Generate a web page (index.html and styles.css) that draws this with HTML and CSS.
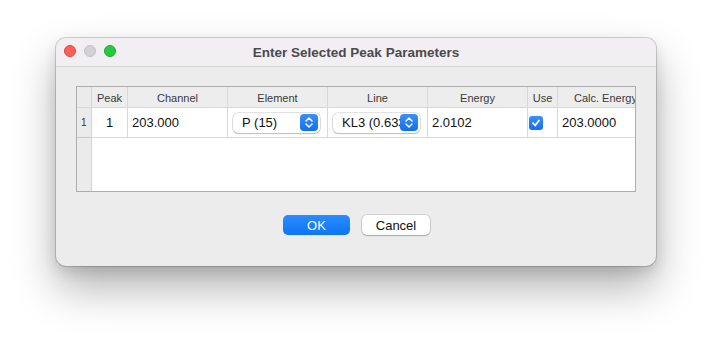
FILE: index.html
```html
<!DOCTYPE html>
<html lang="en">
<head>
    <meta charset="UTF-8">
    <meta name="viewport" content="width=device-width, initial-scale=1.0">
    <title>Enter Selected Peak Parameters</title>
    <link rel="stylesheet" href="styles.css">
</head>
<body>
    <!-- Ventana del diálogo -->
    <div class="window">
        <div class="titlebar">
            <div class="lights">
                <span class="light red"></span>
                <span class="light gray"></span>
                <span class="light green"></span>
            </div>
            <div class="title">Enter Selected Peak Parameters</div>
        </div>

        <div class="content">
            <!-- Tabla de picos -->
            <div class="table">
                <div class="cell corner"></div>
                <div class="cell head">Peak</div>
                <div class="cell head">Channel</div>
                <div class="cell head">Element</div>
                <div class="cell head">Line</div>
                <div class="cell head">Energy</div>
                <div class="cell head">Use</div>
                <div class="cell head last">Calc. Energy</div>

                <div class="cell rowhead">1</div>
                <div class="cell data center">1</div>
                <div class="cell data">203.000</div>
                <div class="cell data">
                    <div class="popup">
                        <span class="popup-text">P (15)</span>
                        <span class="stepper">
                            <svg width="8" height="11" viewBox="0 0 8 11"><path d="M1 4 L4 1 L7 4 M1 7 L4 10 L7 7" fill="none" stroke="#fff" stroke-width="1.5" stroke-linecap="round" stroke-linejoin="round"/></svg>
                        </span>
                    </div>
                </div>
                <div class="cell data">
                    <div class="popup">
                        <span class="popup-text">KL3 (0.6335)</span>
                        <span class="stepper">
                            <svg width="8" height="11" viewBox="0 0 8 11"><path d="M1 4 L4 1 L7 4 M1 7 L4 10 L7 7" fill="none" stroke="#fff" stroke-width="1.5" stroke-linecap="round" stroke-linejoin="round"/></svg>
                        </span>
                    </div>
                </div>
                <div class="cell data">2.0102</div>
                <div class="cell data use">
                    <span class="checkbox">
                        <svg width="10" height="10" viewBox="0 0 10 10"><path d="M2 5.2 L4.2 7.5 L8 2.5" fill="none" stroke="#fff" stroke-width="1.8" stroke-linecap="round" stroke-linejoin="round"/></svg>
                    </span>
                </div>
                <div class="cell data last">203.0000</div>

                <div class="cell rowfill"></div>
                <div class="cell empty"></div>
            </div>

            <!-- Botones -->
            <div class="buttons">
                <button class="btn btn-ok">OK</button>
                <button class="btn btn-cancel">Cancel</button>
            </div>
        </div>
    </div>
</body>
</html>
```

FILE: styles.css
```css
/* Estilo general */
html {
    height: 100%;
    background-color: #ffffff;
}

body {
    margin: 0;
    min-height: 100%;
    box-sizing: border-box;
    padding: 38px 0 0 56px;
    background-color: #ffffff;
    font-family: 'Liberation Sans', Arial, sans-serif;
    font-size: 13px;
    color: #1e1e1e;
}

.window {
    width: 600px;
    height: 228px;
    box-sizing: border-box;
    background-color: #ececec;
    border-radius: 10px;
    box-shadow: 0 0 0 1px rgba(0, 0, 0, 0.16), 0 22px 44px rgba(0, 0, 0, 0.3), 0 6px 14px rgba(0, 0, 0, 0.12);
    overflow: hidden;
}

.titlebar {
    height: 29px;
    box-sizing: border-box;
    background-color: #f1eff2;
    border-bottom: 1px solid #d6d4d7;
    display: flex;
    align-items: center;
    position: relative;
}

.lights {
    display: flex;
    gap: 8px;
    padding-left: 8px;
    position: absolute;
    left: 0;
    top: 7px;
}

.light {
    width: 12px;
    height: 12px;
    border-radius: 50%;
    box-sizing: border-box;
}

.red { background-color: #fe5f57; border: 1px solid #e0443e; }
.gray { background-color: #d3d1d5; border: 1px solid #c3c1c5; }
.green { background-color: #28c840; border: 1px solid #1aab29; }

.title {
    flex: 1;
    text-align: center;
    font-weight: bold;
    font-size: 13.5px;
    color: #4b494d;
}

.content {
    padding: 19px 20px 0 20px;
}

/* Tabla */
.table {
    display: grid;
    grid-template-columns: 15px 36px 100px 100px 100px 100px 30px 1fr;
    grid-template-rows: 21px 30px 53px;
    border: 1px solid #adadad;
    background-color: #ffffff;
}

.cell {
    box-sizing: border-box;
    border-right: 1px solid #d9d9d9;
    border-bottom: 1px solid #d9d9d9;
    display: flex;
    align-items: center;
    white-space: nowrap;
    overflow: hidden;
}

.last { border-right: none; }

.corner, .rowhead, .rowfill {
    background-color: #ebebeb;
    border-right-color: #d3d3d3;
}

.head {
    background-color: #ededed;
    justify-content: center;
    font-size: 11px;
    color: #3a3a3a;
    padding-top: 1px;
}

.head.last {
    justify-content: flex-start;
    padding-left: 16px;
}

.rowhead {
    font-size: 10px;
    color: #333;
    padding-left: 4px;
    border-bottom-color: #c9c9c9;
}

.rowfill {
    border-bottom: none;
}

.empty {
    grid-column: 2 / 9;
    border: none;
}

.data {
    padding-left: 4px;
    font-size: 13px;
    color: #111;
}

.center {
    justify-content: center;
    padding-left: 0;
}

.data .popup {
    margin-left: 1px;
}

.popup {
    width: 87px;
    height: 20px;
    flex-shrink: 0;
    box-sizing: border-box;
    background-color: #fff;
    border-radius: 5px;
    box-shadow: 0 0 0 0.5px rgba(0, 0, 0, 0.22), 0 1px 1.5px rgba(0, 0, 0, 0.18);
    display: flex;
    align-items: center;
    padding-left: 9px;
    padding-right: 2px;
}

.popup-text {
    flex: 1;
    overflow: hidden;
    white-space: nowrap;
    font-size: 13px;
    color: #111;
}

.stepper {
    width: 18px;
    height: 17px;
    border-radius: 4px;
    background: linear-gradient(#3b8ff9, #1170f1);
    display: flex;
    align-items: center;
    justify-content: center;
    flex-shrink: 0;
}

.use {
    padding-left: 1px;
}

.checkbox {
    width: 14px;
    height: 14px;
    border-radius: 3px;
    background: linear-gradient(#3b8ff9, #1170f1);
    display: flex;
    align-items: center;
    justify-content: center;
}

/* Botones */
.buttons {
    display: flex;
    justify-content: center;
    gap: 12px;
    margin-top: 23px;
}

.btn {
    width: 67px;
    height: 20px;
    border-radius: 5px;
    font-family: 'Liberation Sans', Arial, sans-serif;
    font-size: 13px;
    padding: 0;
    cursor: pointer;
}

.btn-ok {
    background: linear-gradient(#2c8bff, #0b76f7);
    color: #fff;
    border: none;
    margin-left: 1px;
}

.btn-cancel {
    width: 68px;
    background-color: #fff;
    color: #111;
    border: none;
    box-shadow: 0 0 0 0.5px rgba(0, 0, 0, 0.22), 0 1px 1.5px rgba(0, 0, 0, 0.2);
}
```
